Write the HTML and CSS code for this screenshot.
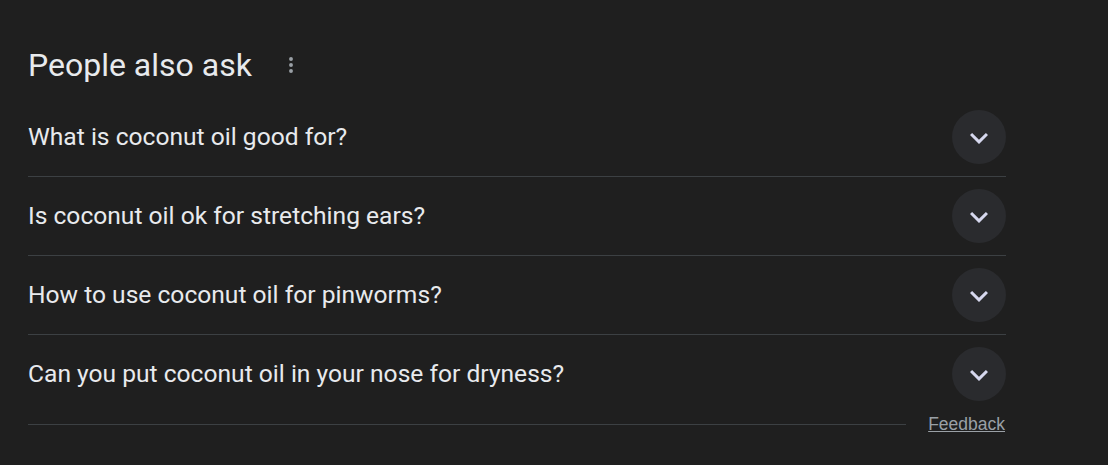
FILE: index.html
```html
<!DOCTYPE html>
<html>
<head>
<meta charset="utf-8">
<link rel="stylesheet" href="styles.css">
</head>
<body>
<div class="paa">
  <div class="head">
    <h2 class="title">People also ask</h2>
    <span class="more">
      <svg width="22" height="22" viewBox="0 0 24 24"><circle cx="12" cy="5.5" r="2.1" fill="#9aa0a6"/><circle cx="12" cy="12" r="2.1" fill="#9aa0a6"/><circle cx="12" cy="18.5" r="2.1" fill="#9aa0a6"/></svg>
    </span>
  </div>
  <div class="list">
    <div class="row"><span class="q">What is coconut oil good for?</span><span class="btn"><svg width="36" height="36" viewBox="0 0 24 24"><path d="M16.59 8.59L12 13.17 7.41 8.59 6 10l6 6 6-6z" fill="#d6d8ee"/></svg></span></div>
    <div class="row"><span class="q">Is coconut oil ok for stretching ears?</span><span class="btn"><svg width="36" height="36" viewBox="0 0 24 24"><path d="M16.59 8.59L12 13.17 7.41 8.59 6 10l6 6 6-6z" fill="#d6d8ee"/></svg></span></div>
    <div class="row"><span class="q">How to use coconut oil for pinworms?</span><span class="btn"><svg width="36" height="36" viewBox="0 0 24 24"><path d="M16.59 8.59L12 13.17 7.41 8.59 6 10l6 6 6-6z" fill="#d6d8ee"/></svg></span></div>
    <div class="row last"><span class="q">Can you put coconut oil in your nose for dryness?</span><span class="btn"><svg width="36" height="36" viewBox="0 0 24 24"><path d="M16.59 8.59L12 13.17 7.41 8.59 6 10l6 6 6-6z" fill="#d6d8ee"/></svg></span></div>
  </div>
  <div class="foot">
    <div class="line"></div>
    <a class="feedback" href="#">Feedback</a>
  </div>
</div>
</body>
</html>
```
FILE: styles.css
```css
html, body {
  margin: 0;
  padding: 0;
  background: #1f1f1f;
}
body {
  font-family: Roboto, "Liberation Sans", Arial, sans-serif;
  color: #e8eaed;
}
.paa {
  width: 978px;
  margin-left: 28px;
  padding-top: 46px;
}
.head {
  display: flex;
  align-items: center;
  height: 38px;
}
.title {
  margin: 0;
  font-size: 32px;
  font-weight: 400;
  line-height: 38px;
  color: #e8eaed;
}
.more {
  display: flex;
  margin-left: 28px;
}
.list {
  margin-top: 14px;
}
.row {
  display: flex;
  align-items: center;
  justify-content: space-between;
  height: 78px;
  border-bottom: 1px solid #3c4043;
}
.row.last {
  border-bottom: none;
}
.q {
  font-size: 24.6px;
  line-height: 30px;
}
.btn {
  width: 54px;
  height: 54px;
  border-radius: 50%;
  background: #2a2b2e;
  display: flex;
  align-items: center;
  justify-content: center;
}
.btn svg { margin-top: 1px; }
.foot {
  display: flex;
  align-items: center;
  height: 22px;
}
.line {
  flex: 1;
  height: 1px;
  background: #3c4043;
  margin-right: 22px;
}
.feedback {
  font-family: "Liberation Sans", Arial, sans-serif;
  font-size: 17.5px;
  color: #9aa0a6;
  text-decoration: underline;
  margin-right: 1px;
}
```
